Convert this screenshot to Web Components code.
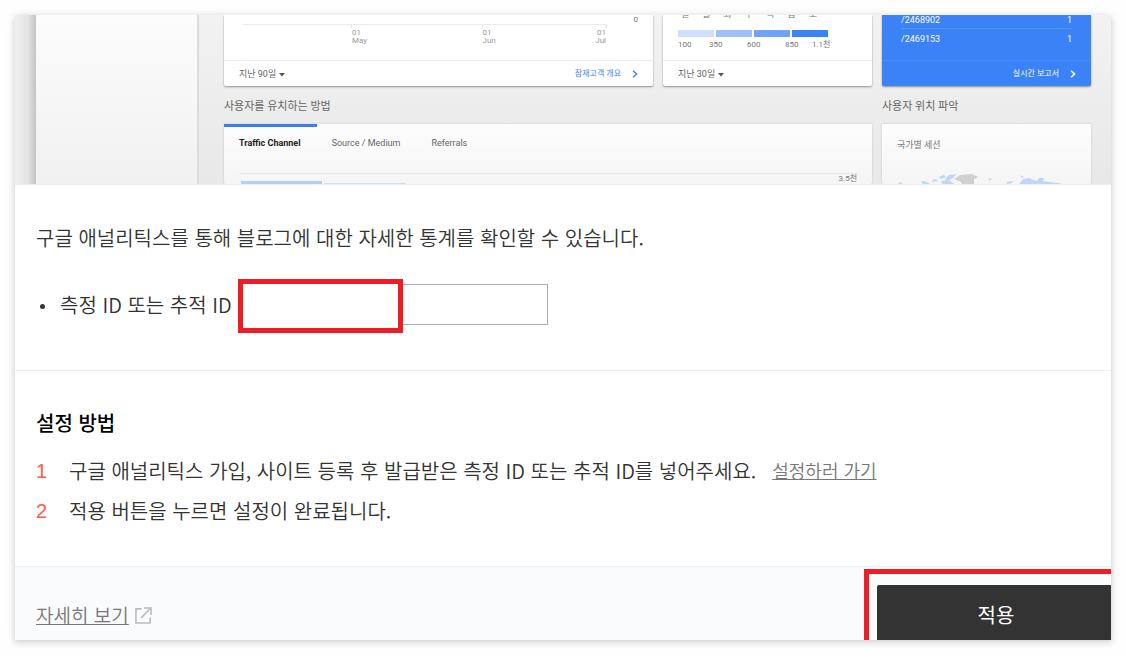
<!DOCTYPE html>
<html lang="ko">
<head>
<meta charset="utf-8">
<meta name="viewport" content="width=device-width">
<title>구글 애널리틱스</title>
<style>
body { margin: 0; background: #fefefe; font-family: "Noto Sans CJK KR", sans-serif; color: #333; }
</style>
</head>
<body>
<plugin-dialog>
  <analytics-preview slot="preview"></analytics-preview>
  <tracking-form></tracking-form>
  <setup-guide></setup-guide>
  <dialog-footer></dialog-footer>
</plugin-dialog>

<script>
function define(name, html) {
  const template = document.createElement('template');
  template.innerHTML = html;
  customElements.define(name, class extends HTMLElement {
    constructor() {
      super();
      this.attachShadow({ mode: 'open' }).append(template.content.cloneNode(true));
    }
  });
}

define('plugin-dialog', `
<style>
:host { display: block; margin: 15px; background: #fff; border-radius: 4px 4px 0 0; box-shadow: 0 2px 6px 1px rgba(0,0,0,.15), 0 0 14px rgba(0,0,0,.04); overflow: hidden; }
</style>
<slot name="preview"></slot><slot></slot>`);

define('report-card', `
<style>
:host { display: flex; flex-direction: column; min-width: 0; box-sizing: border-box; background: #fff; border-radius: 0 0 2px 2px; box-shadow: 0 1px 2px rgba(0,0,0,.4); }
:host([tone="blue"]) { background: #3c82f7; color: #fff; --rule: #4a8cf9; }
:host([tone="soft"]) { background: linear-gradient(#fdfdfd, #f5f5f5); box-shadow: 0 0 2px rgba(0,0,0,.2); }
.body { flex: 1; min-height: 0; }
footer { display: flex; align-items: center; justify-content: space-between; height: 25px; padding: 0 15px; border-top: 1px solid var(--rule, #ebebeb); }
:host([tone="soft"]) footer { display: none; }
</style>
<div class="body"><slot></slot></div>
<footer><slot name="range"><span></span></slot><slot name="more"></slot></footer>`);

define('range-picker', `
<style>
:host { display: flex; align-items: center; gap: 3px; font-size: 9px; line-height: 12px; color: #666; }
svg { display: block; margin-top: 3px; }
</style>
<slot></slot><svg width="6" height="4" viewBox="0 0 6 4"><path d="M0 0h6L3 3.5z" fill="#555"/></svg>`);

define('more-link', `
<style>
:host { display: block; }
a { display: flex; align-items: center; gap: 11px; font-size: 8px; line-height: 12px; color: inherit; text-decoration: none; }
svg { display: block; }
</style>
<a href="#"><slot></slot><svg width="6" height="8" viewBox="0 0 6 8" fill="none" stroke="currentColor" stroke-width="1.5"><path d="M1 .7 4.6 4 1 7.3"/></svg></a>`);

define('analytics-preview', `
<style>
:host { display: flex; height: 169px; overflow: hidden; background: linear-gradient(#f2f2f2, #e8e8e8); font-family: Roboto, "Noto Sans CJK KR", sans-serif; font-size: 8px; line-height: 8px; color: #777; }
.rail { flex: none; width: 21px; background: linear-gradient(90deg, #efefef, #e4e4e4 60%, #c4c4c4); }
.side { flex: none; width: 161px; background: linear-gradient(#fcfcfc, #f1f1f1); border-right: 2px solid #dcdcdc; }
.board { flex: 1; min-width: 0; display: grid; grid-template-columns: 429fr 209fr 209fr; grid-template-rows: 71px 38px 60px; column-gap: 10px; padding: 0 20px 0 25px; }
.wide { grid-column: span 2; }
h3 { margin: 0; padding-top: 3px; align-self: center; font-size: 11px; line-height: 16px; font-weight: 400; color: #666; }
.zero { display: flex; justify-content: flex-end; align-items: center; height: 9px; padding: 0 15px; }
.axis { display: grid; grid-template-columns: 130fr 109fr 16fr; margin: 0 46px 0 19px; border-top: 1px solid #ebebeb; padding-left: 108px; color: #999; }
.axis span { border-left: 1px solid #e3e3e3; border-image: linear-gradient(#e3e3e3 4px, transparent 4px) 1; padding-top: 4px; white-space: pre; }
.axis span:last-child { border-width: 0 1px 0 0; border-style: solid; text-align: right; }
.days { display: flex; align-items: flex-end; gap: 13px; height: 4px; overflow: hidden; padding-left: 18px; font-size: 9px; line-height: 9px; }
.scale { display: grid; grid-template-columns: repeat(4, 36px); gap: 2px; padding: 11px 15px 0; }
.scale i { height: 7px; }
.ticks { display: grid; grid-template-columns: 31px 38px 38px 27px auto; padding: 4px 15px 0; }
.pages { margin: 0 19px; border-collapse: collapse; width: calc(100% - 38px); font-size: 9px; line-height: 10px; }
.pages td { padding: 0; height: 13px; vertical-align: top; }
.pages tr + tr td { height: 20px; border-top: 1px solid #5593f9; vertical-align: middle; }
.pages td:last-child { text-align: right; }
more-link.link { color: #4285f4; }
.tabs { display: flex; height: 49px; font-size: 9px; }
.tabs button { font: inherit; line-height: 12px; color: #666; border: 0; background: none; padding: 8px 16px 23px 15px; border-top: 3px solid transparent; }
.tabs button.on { color: #222; font-weight: 700; border-top-color: #3c7cf4; }
.plot { display: flex; align-items: flex-start; margin: 0 15px; border-top: 1px solid #e9e9e9; }
.bar { width: 81px; height: 6px; margin: 7px 2px 0; background: #b4cdf9; }
.bar.b { background: #cfdefa; width: 82px; margin: 9px 0 0; }
.plot span { margin-left: auto; font-size: 8px; line-height: 10px; }
.label { padding: 15px 15px 0; font-size: 9px; line-height: 13px; }
.map { display: block; width: 180px; height: 34px; margin: 21px 15px 0; }
</style>
<div class="rail"></div>
<div class="side"></div>
<div class="board">
  <report-card>
    <div class="zero">0</div>
    <div class="axis"><span>01
May</span><span>01
Jun</span><span>01
Jul</span></div>
    <range-picker slot="range">지난 90일</range-picker>
    <more-link slot="more" class="link">잠재고객 개요</more-link>
  </report-card>
  <report-card>
    <div class="days"><span>일</span><span>월</span><span>화</span><span>수</span><span>목</span><span>금</span><span>토</span></div>
    <div class="scale"><i style="background:#cfdffd"></i><i style="background:#9dc0fb"></i><i style="background:#6fa3f9"></i><i style="background:#3c82f7"></i></div>
    <div class="ticks"><span>100</span><span>350</span><span>600</span><span>850</span><span>1.1천</span></div>
    <range-picker slot="range">지난 30일</range-picker>
  </report-card>
  <report-card tone="blue">
    <table class="pages"><tbody><tr><td>/2468902</td><td>1</td></tr><tr><td>/2469153</td><td>1</td></tr></tbody></table>
    <more-link slot="more">실시간 보고서</more-link>
  </report-card>
  <h3 class="wide">사용자를 유치하는 방법</h3>
  <h3>사용자 위치 파악</h3>
  <report-card tone="soft" class="wide">
    <div class="tabs"><button class="on">Traffic Channel</button><button>Source / Medium</button><button>Referrals</button></div>
    <div class="plot"><div class="bar"></div><div class="bar b"></div><span>3.5천</span></div>
  </report-card>
  <report-card tone="soft">
    <div class="label">국가별 세션</div>
    <svg class="map" viewBox="0 0 180 34"><g fill="#c3d5f7"><path d="M1 11l2-2 3 2zM24 9l2-1 4 1 3 2-7 0zM35 7l4-1 2 2-5 1zM42 4l5-2 2 2-5 2zM48 6l4-4 8-1-4 4-6 3zM44 8l8-1 4 3 4 2H46zM91 6l4-1-2 3zM110 9l6-1-1 2-5 1zM123 2l4 2-2 1zM123 10l3-4 7-1 3 2 4 1 2-3 5 0-1 3 6 1 10 1 4 2H122z"/></g><path d="M57 6l6-4 12-1 6 3-4 2 0 6-4 8-6-3-3-8z" fill="#d0d0d0"/></svg>
  </report-card>
</div>`);

define('tracking-form', `
<style>
:host { display: block; padding: 38px 21px 40px; border-bottom: 1px solid #f0f0f0; border-top: 1px solid #eee; font-size: 20px; line-height: 30px; font-weight: 350; }
p { margin: 0 0 26px; }
ul { margin: 0; padding: 0; list-style: none; }
li { display: flex; align-items: center; }
li::before { content: ""; width: 5px; height: 5px; margin: 3px 15px 0 4px; border-radius: 50%; background: #333; }
.field { position: relative; margin: 5px 0 5px 6px; }
input { display: block; box-sizing: border-box; width: 310px; height: 41px; padding: 0 10px; border: 1px solid #a5abb8; border-radius: 0; background: #fff; font: inherit; }
.mark { position: absolute; inset: -5px 145px -8px 0; border: 5px solid #ee1c25; background: #fff; pointer-events: none; }
</style>
<p>구글 애널리틱스를 통해 블로그에 대한 자세한 통계를 확인할 수 있습니다.</p>
<ul><li><label for="tracking-id">측정 ID 또는 추적 ID</label><div class="field"><input id="tracking-id" type="text"><div class="mark"></div></div></li></ul>`);

define('setup-guide', `
<style>
:host { display: block; padding: 37px 21px 35px; border-bottom: 1px solid #eef0f2; font-size: 20px; line-height: 30px; font-weight: 350; }
h2 { margin: 0 0 13px; font-size: 20px; line-height: 30px; font-weight: 500; color: #000; }
ol { margin: 0; padding: 0; list-style: none; }
li { display: flex; height: 40px; line-height: 40px; }
.n { width: 33px; font-family: "Liberation Sans", sans-serif; font-size: 20px; font-weight: 400; color: #ff5a4a; }
a { margin-left: 16px; font-size: 18px; line-height: 38px; color: #777; text-decoration: underline; }
</style>
<h2>설정 방법</h2>
<ol>
<li><span class="n">1</span><span>구글 애널리틱스 가입, 사이트 등록 후 발급받은 측정 ID 또는 추적 ID를 넣어주세요.</span><a href="#">설정하러 가기</a></li>
<li><span class="n">2</span><span>적용 버튼을 누르면 설정이 완료됩니다.</span></li>
</ol>`);

define('dialog-footer', `
<style>
:host { display: flex; justify-content: space-between; padding: 2px 0 0 21px; background: #fafbfd; }
a { display: flex; align-items: center; align-self: flex-end; gap: 6px; height: 50px; font-size: 19px; line-height: 28px; color: #777; font-weight: 350; text-decoration: none; }
a span { text-decoration: underline; }
svg { display: block; }
.mark { border: 5px solid #ee1c25; border-width: 5px 0 0 5px; padding: 11px 0 0 8px; }
button { display: block; width: 234px; height: 55px; padding: 4px 0 0 4px; border: 0; border-radius: 2px 0 0 0; background: #333; color: #fff; font: 400 20px/30px "Noto Sans CJK KR", sans-serif; }
</style>
<a href="#"><span>자세히 보기</span><svg width="17" height="17" viewBox="0 0 18 18" fill="none" stroke="#bbb" stroke-width="1.7"><path d="M7 2H1v15h15v-6M6.500 11.500 16.500 1M9.500 1H17v7.500"/></svg></a>
<div class="mark"><button type="button">적용</button></div>`);
</script>
</body>
</html>
